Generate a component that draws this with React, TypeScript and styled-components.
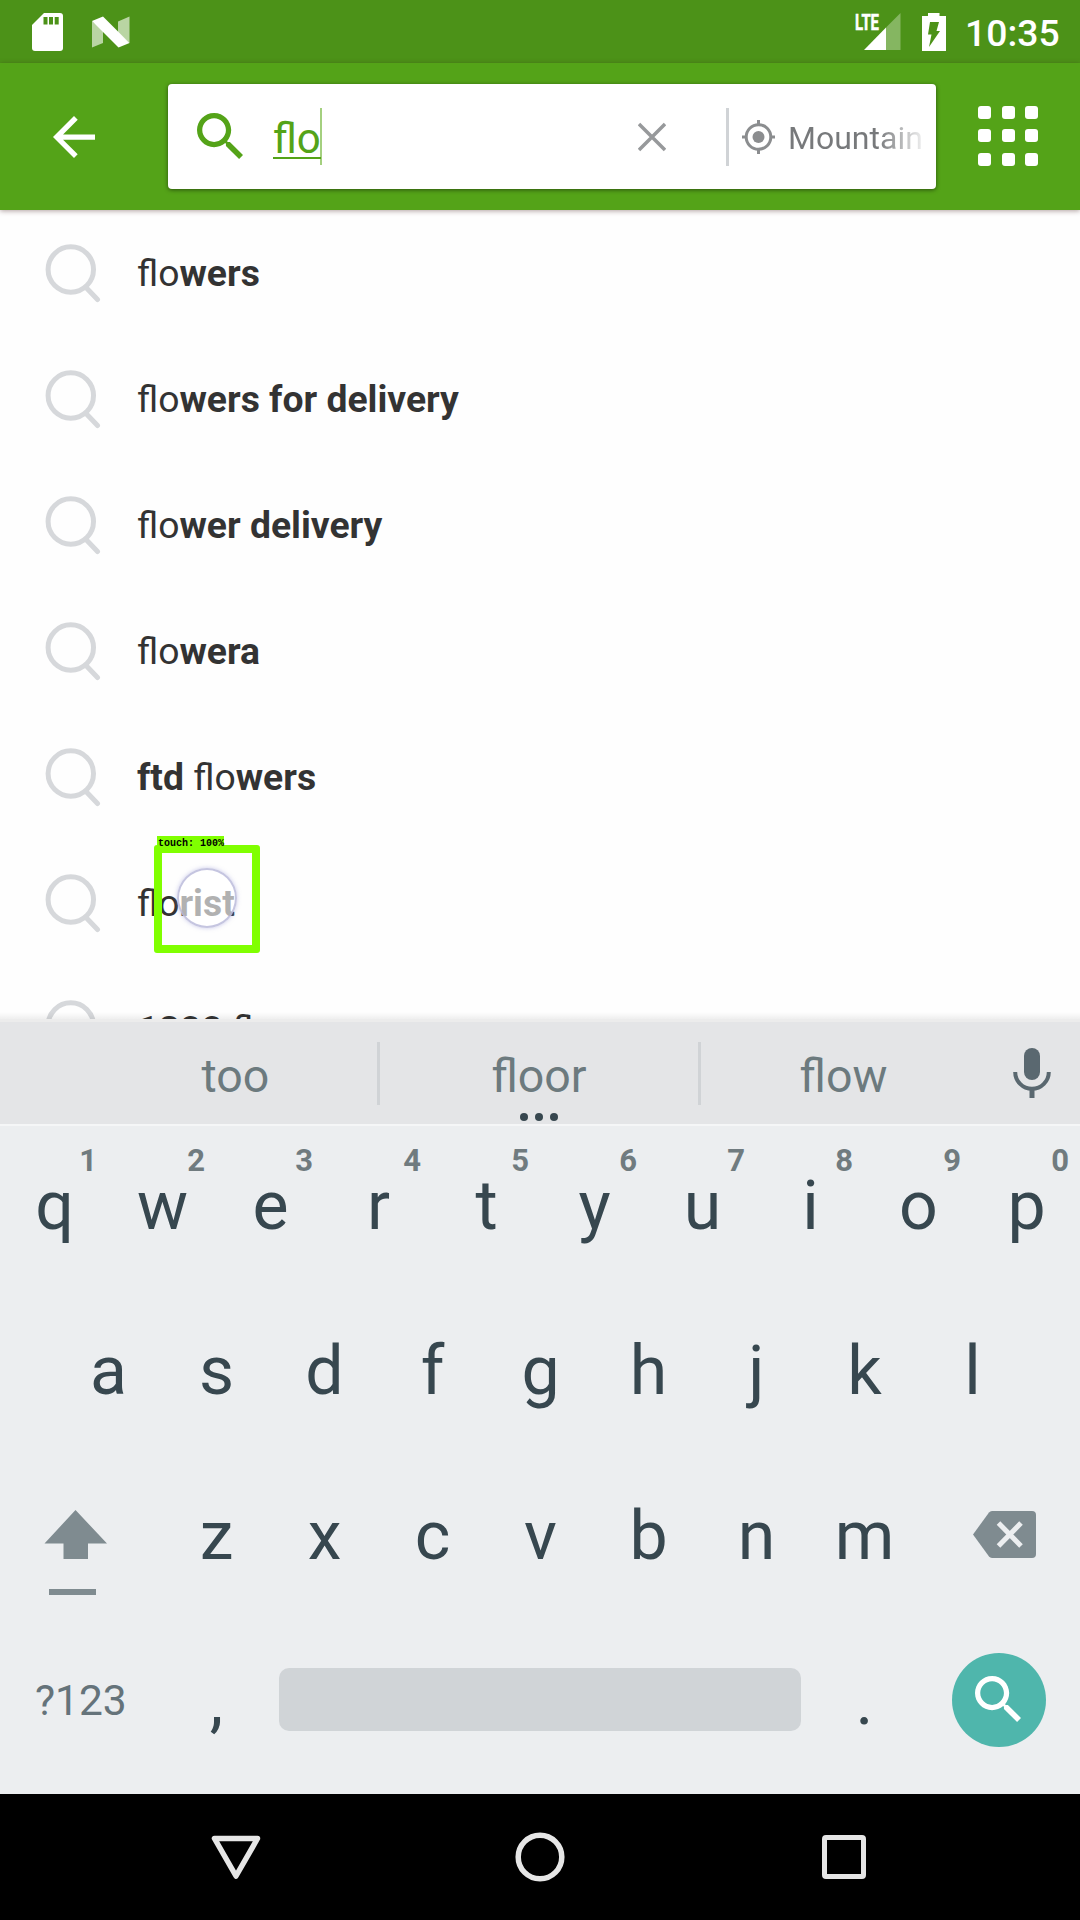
import React from "react";
import styled, { createGlobalStyle } from "styled-components";

const GlobalStyle = createGlobalStyle`
  * { box-sizing: border-box; }
  body { margin: 0; background: #fefefe; font-family: Roboto, "Liberation Sans", sans-serif; }
  svg { display: block; flex: none; }
`;

const Screen = styled.div`
  width: 1080px;
  height: 1920px;
  display: flex;
  flex-direction: column;
  overflow: hidden;
  background: #fefefe;
`;

const StatusBar = styled.div`
  flex: none;
  height: 63px;
  display: flex;
  align-items: center;
  padding: 0 19px 0 32px;
  background: #4c9218;
`;

const StatusSpacer = styled.div`
  flex: 1;
`;

const Clock = styled.div`
  margin-left: 19px;
  width: 96px;
  font-size: 37.3px;
  font-weight: 500;
  line-height: 44px;
  padding-top: 2px;
  color: #fff;
`;

const NougatIcon = styled.svg`
  margin-left: 28px;
`;

const BatteryIcon = styled.svg`
  margin-left: 21px;
`;

const AppBar = styled.div`
  flex: none;
  position: relative;
  z-index: 1;
  height: 147px;
  display: flex;
  align-items: center;
  background: #54a318;
  box-shadow: 0 1px 5px rgba(60, 20, 20, 0.4);
`;

const BackButton = styled.div`
  width: 168px;
  padding: 0 0 0 53px;
`;

const SearchBox = styled.div`
  width: 768px;
  height: 105px;
  display: flex;
  align-items: center;
  padding-left: 29px;
  border-radius: 4px;
  background: #fff;
  box-shadow: 0 1px 4px rgba(0, 0, 0, 0.5);
`;

const SearchGlyph = styled.div`
  padding-bottom: 2px;
`;

const Query = styled.div`
  display: flex;
  align-items: center;
  width: 365px;
  height: 57px;
  margin-left: 30px;
`;

const QueryText = styled.span`
  height: 57px;
  padding-top: 6px;
  border-right: 2px solid #a4d07f;
  color: #54a318;
  font-size: 42px;
  line-height: 49px;
`;

const Composing = styled.span`
  display: block;
  height: 45px;
  margin-right: -1px;
  border-bottom: 2px solid #54a318;
`;

const ClearButton = styled.div`
  width: 88px;
`;

const Divider = styled.div<{ $h: number }>`
  flex: none;
  width: 3px;
  height: ${(p) => p.$h}px;
  background: #d0d3d6;
`;

const TargetIcon = styled.svg`
  margin-left: 13px;
`;

const LocationText = styled.div`
  width: 133px;
  margin-left: 13px;
  overflow: hidden;
  white-space: nowrap;
  font-size: 32px;
  line-height: 40px;
  padding-top: 2px;
  color: transparent;
  background: linear-gradient(90deg, #77797b 0, #77797b 90px, rgba(119, 121, 123, 0.15) 133px);
  background-clip: text;
  -webkit-background-clip: text;
`;

const AppsGrid = styled.div`
  display: grid;
  grid-template-columns: repeat(3, 13px);
  gap: 10.5px;
  margin: 0 0 2px 42px;
`;

const AppsDot = styled.i`
  height: 13px;
  border-radius: 3px;
  background: #fff;
`;

const Results = styled.div`
  position: relative;
  flex: none;
  height: 809px;
  overflow: hidden;
`;

const ResultRow = styled.div`
  height: 126px;
  display: flex;
  align-items: center;
  padding-left: 45px;
  color: #333;
`;

const ResultText = styled.div`
  margin-left: 35px;
  font-size: 37.3px;
  line-height: 44px;
  padding-bottom: 1px;
  white-space: pre;
  b { font-weight: 700; }
`;

const TouchBox = styled.div`
  position: absolute;
  left: 154px;
  top: 635px;
  width: 106px;
  height: 108px;
  border: 8px solid #80ff00;
  border-radius: 3px;
`;

const TouchLabel = styled.div`
  position: absolute;
  left: -5px;
  top: -17px;
  width: 67px;
  height: 11px;
  padding: 3px 0 0 1px;
  background: #80ff00;
  color: #000;
  font: 700 10px/10px "Liberation Mono", monospace;
  white-space: pre;
`;

const TouchRing = styled.div`
  position: absolute;
  left: 15px;
  top: 15px;
  width: 60px;
  height: 60px;
  border-radius: 50%;
  border: 2px solid rgba(178, 178, 214, 0.75);
  background: rgba(255, 255, 255, 0.62);
  box-shadow: 0 0 4px rgba(150, 150, 215, 0.5);
`;

const KeyboardShadow = styled.div`
  position: relative;
  flex: none;
  height: 3px;
  background: #ececec;
  &::before {
    content: "";
    position: absolute;
    left: 0;
    right: 0;
    bottom: 3px;
    height: 7px;
    background: linear-gradient(rgba(0, 0, 0, 0), rgba(0, 0, 0, 0.06));
  }
`;

const Suggestions = styled.div`
  position: relative;
  flex: none;
  height: 104px;
  display: grid;
  grid-template-columns: 92px 285px 3px 318px 3px 287px 92px;
  align-items: center;
  background: #e4e5e7;
  border-bottom: 2px solid #f5f6f7;
`;

const Suggestion = styled.div<{ $before?: number; $after?: number }>`
  text-align: center;
  font-size: 46.5px;
  line-height: 54px;
  padding: 6px ${(p) => p.$after ?? 0}px 0 ${(p) => p.$before ?? 0}px;
  color: #6c7a7e;
`;

const MicButton = styled.div`
  padding-left: 25px;
`;

const Dots = styled.div`
  position: absolute;
  left: 520px;
  bottom: 3px;
  display: flex;
  gap: 7px;
`;

const Dot = styled.i`
  width: 8px;
  height: 8px;
  border-radius: 50%;
  background: #37474f;
`;

const Keyboard = styled.div`
  flex: none;
  height: 668px;
  padding-top: 4px;
  background: #eceef0;
`;

const KeyRow = styled.div<{ $inset?: number }>`
  height: 165px;
  display: flex;
  padding: 0 ${(p) => p.$inset ?? 0}px;
`;

const Key = styled.div`
  position: relative;
  flex: none;
  width: 108px;
  padding: 36px 0 0 1px;
  text-align: center;
  font-size: 68px;
  line-height: 80px;
  color: #37474f;
`;

const Hint = styled.span`
  position: absolute;
  right: 11px;
  top: 13px;
  font-size: 31px;
  font-weight: 700;
  line-height: 36px;
  color: #707b7f;
`;

const SymbolKey = styled.div`
  width: 162px;
  padding: 51px 0 0 35px;
  font-size: 42.5px;
  line-height: 50px;
  color: #65737a;
`;

const SpaceBar = styled.div`
  width: 522px;
  height: 63px;
  margin: 43px 9px 0;
  border-radius: 10px;
  background: #d0d4d7;
`;

const SearchKey = styled.div`
  width: 94px;
  height: 94px;
  margin: 28px 0 0 34px;
  padding: 0 2px 2px 0;
  display: flex;
  align-items: center;
  justify-content: center;
  border-radius: 50%;
  background: #4fb6ac;
`;

const IconKey = styled.div<{ $left: number; $top: number }>`
  flex: none;
  width: 162px;
  padding: ${(p) => p.$top}px 0 0 ${(p) => p.$left}px;
`;

const NavBar = styled.div`
  flex: none;
  height: 126px;
  display: grid;
  grid-template-columns: repeat(3, 304px);
  justify-content: center;
  justify-items: center;
  align-items: center;
  background: #000;
`;

const Magnifier = ({ color }: { color: string }) => (
  <svg width="46" height="46" viewBox="3 3 17.49 17.49" fill={color}>
    <path d="M15.5 14h-.79l-.28-.27C15.41 12.59 16 11.11 16 9.5 16 5.91 13.09 3 9.5 3S3 5.91 3 9.5 5.91 16 9.5 16c1.61 0 3.09-.59 4.23-1.57l.27.28v.79l5 4.99L20.49 19l-4.99-5zm-6 0C7.01 14 5 11.99 5 9.5S7.01 5 9.5 5 14 7.01 14 9.5 11.99 14 9.5 14z" />
  </svg>
);

const RowMagnifier = () => (
  <svg width="57" height="60" viewBox="0 0 57 60" fill="none" stroke="#d6d8db" strokeWidth="5">
    <circle cx="25.8" cy="26.500" r="22.700" />
    <path d="M41.500 45 52.500 56.500" strokeLinecap="round" />
  </svg>
);

const RESULTS: [string, string, string][] = [
  ["", "flo", "wers"],
  ["", "flo", "wers for delivery"],
  ["", "flo", "wer delivery"],
  ["", "flo", "wera"],
  ["ftd ", "flo", "wers"],
  ["", "flo", "rist"],
  ["1800 ", "flo", "wers"],
];

const TOP_ROW = "qwertyuiop".split("");
const HOME_ROW = "asdfghjkl".split("");
const LOWER_ROW = "zxcvbnm".split("");

export default function App() {
  return (
    <>
      <GlobalStyle />
      <Screen>
        <StatusBar>
          <svg width="31" height="38" viewBox="0 0 31 38">
            <path fill="#fff" d="M12 0H28a3 3 0 0 1 3 3V35a3 3 0 0 1-3 3H3a3 3 0 0 1-3-3V12Z" />
            <path fill="#4c9218" d="M11.5 4h4v7.500h-4zM17 4h4v7.500h-4zM22.700 4h4v7.500h-4z" />
          </svg>
          <NougatIcon width="40" height="38" viewBox="0 0 40 38">
            <path fill="#b9d5a3" d="M1 8 12 17V30L1 34.500ZM38.500 3.500V30L27 20V8.500Z" />
            <path fill="#fff" d="M1 8 12 3.500 38.500 30 27.500 34.500Z" />
          </NougatIcon>
          <StatusSpacer />
          <svg width="46" height="38" viewBox="0 0 46 38">
            <path fill="#85b661" d="M45.500 0V37H31V14.500Z" />
            <path fill="#fff" d="M31 14.500V37H9Z" />
            <text x="0" y="17" fill="#fff" stroke="#fff" strokeWidth="0.6" fontFamily="Roboto" fontWeight="700" fontSize="22.500" textLength="24" lengthAdjust="spacingAndGlyphs">LTE</text>
          </svg>
          <BatteryIcon width="24" height="38" viewBox="0 0 24 38">
            <path fill="#fff" d="M6 0H17.500V3H24V38H0V3H6Z" />
            <path fill="#4c9218" d="M8 9H17L14.500 18H18L7 34 9.500 21.500H6Z" />
          </BatteryIcon>
          <Clock>10:35</Clock>
        </StatusBar>

        <AppBar>
          <BackButton>
            <svg width="42" height="42" viewBox="4 4 16 16" fill="#fff">
              <path d="M20 11H7.830l5.590-5.590L12 4l-8 8 8 8 1.410-1.410L7.830 13H20v-2z" />
            </svg>
          </BackButton>
          <SearchBox>
            <SearchGlyph>
              <Magnifier color="#54a318" />
            </SearchGlyph>
            <Query>
              <QueryText>
                <Composing>flo</Composing>
              </QueryText>
            </Query>
            <ClearButton>
              <svg width="28" height="30" viewBox="0 0 28 30" stroke="#97999b" strokeWidth="3.500">
                <path d="M1 2 27 28M27 2 1 28" />
              </svg>
            </ClearButton>
            <Divider $h={58} />
            <TargetIcon width="33" height="34" viewBox="0 0 33 34" fill="none" stroke="#8b8d8f" strokeWidth="3">
              <circle cx="16.500" cy="17" r="12.300" />
              <circle cx="16.500" cy="17" r="6" fill="#8b8d8f" stroke="none" />
              <path d="M16.500 0V5M16.500 29V34M0 17H5M28 17H33" />
            </TargetIcon>
            <LocationText>Mountain</LocationText>
          </SearchBox>
          <AppsGrid>
            {Array.from({ length: 9 }, (_, i) => (
              <AppsDot key={i} />
            ))}
          </AppsGrid>
        </AppBar>

        <Results>
          {RESULTS.map(([before, match, after], i) => (
            <ResultRow key={i}>
              <RowMagnifier />
              <ResultText>
                <b>{before}</b>
                {match}
                <b>{after}</b>
              </ResultText>
            </ResultRow>
          ))}
          <TouchBox>
            <TouchRing />
            <TouchLabel>touch: 100%</TouchLabel>
          </TouchBox>
        </Results>

        <KeyboardShadow />
        <Suggestions>
          <span />
          <Suggestion $before={2}>too</Suggestion>
          <Divider $h={63} />
          <Suggestion>floor</Suggestion>
          <Divider $h={63} />
          <Suggestion $after={2}>flow</Suggestion>
          <MicButton>
            <svg width="38" height="50" viewBox="0 0 38 50">
              <rect x="11" y="0" width="16" height="32" rx="8" fill="#5a6870" />
              <path d="M2.200 24a16.500 16.500 0 0 0 33.600 0" fill="none" stroke="#5a6870" strokeWidth="4" />
              <path d="M16.500 40h5v10h-5z" fill="#5a6870" />
            </svg>
          </MicButton>
          <Dots>
            <Dot />
            <Dot />
            <Dot />
          </Dots>
        </Suggestions>

        <Keyboard>
          <KeyRow>
            {TOP_ROW.map((k, i) => (
              <Key key={k}>
                {k}
                <Hint>{(i + 1) % 10}</Hint>
              </Key>
            ))}
          </KeyRow>
          <KeyRow $inset={54}>
            {HOME_ROW.map((k) => (
              <Key key={k}>{k}</Key>
            ))}
          </KeyRow>
          <KeyRow>
            <IconKey $left={44} $top={50}>
              <svg width="64" height="86" viewBox="0 0 64 86" fill="#7f8b90">
                <path d="M31.500 0 63 33.500H44V49H19.500V33.500H.5ZM5 79H52V85H5Z" />
              </svg>
            </IconKey>
            {LOWER_ROW.map((k) => (
              <Key key={k}>{k}</Key>
            ))}
            <IconKey $left={55} $top={51}>
              <svg width="63" height="47" viewBox="0 0 63 47">
                <path fill="#7f8b90" d="M19 0H59a4 4 0 0 1 4 4V43a4 4 0 0 1-4 4H19a4 4 0 0 1-3-1.500L0 23.500 16 1.500A4 4 0 0 1 19 0Z" />
                <path stroke="#eceef0" strokeWidth="5" d="M25.500 12 48 35M48 12 25.500 35" />
              </svg>
            </IconKey>
          </KeyRow>
          <KeyRow>
            <SymbolKey>?123</SymbolKey>
            <Key>,</Key>
            <SpaceBar />
            <Key>.</Key>
            <SearchKey>
              <Magnifier color="#fff" />
            </SearchKey>
          </KeyRow>
        </Keyboard>

        <NavBar>
          <svg width="50" height="50" viewBox="0 0 50 50" fill="none" stroke="#e6e6e6" strokeWidth="5.500" strokeLinejoin="round">
            <path d="M3.500 6.500H46.500L25 44Z" />
          </svg>
          <svg width="50" height="50" viewBox="0 0 50 50" fill="none" stroke="#e6e6e6" strokeWidth="5.500">
            <circle cx="25" cy="25" r="21.800" />
          </svg>
          <svg width="44" height="44" viewBox="0 0 44 44" fill="none" stroke="#e6e6e6" strokeWidth="5">
            <rect x="2.500" y="2.500" width="39" height="39" rx="1.500" />
          </svg>
        </NavBar>
      </Screen>
    </>
  );
}
